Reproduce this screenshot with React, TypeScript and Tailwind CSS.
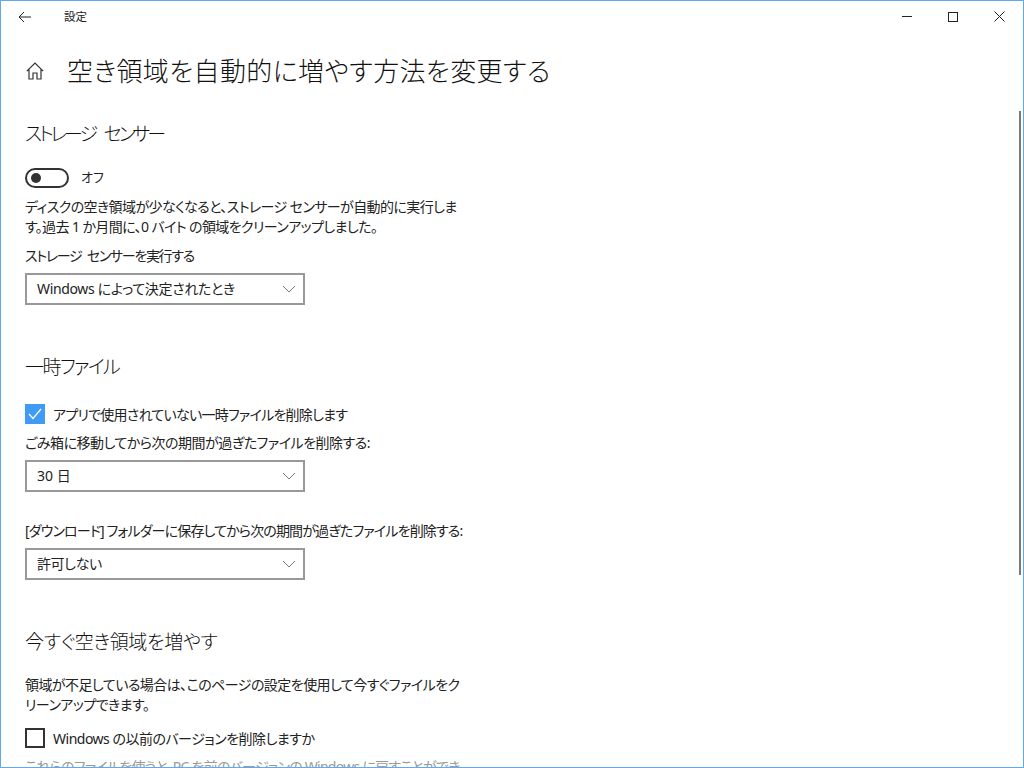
import React from 'react';

const FONT = "font-['Noto_Sans','Noto_Sans_CJK_JP',sans-serif] [font-feature-settings:'palt']";

function Heading({ children, className }: { children: React.ReactNode; className: string }) {
  return <h2 className={`text-[19px] leading-[28px] font-light text-[#111] whitespace-nowrap ${className}`}>{children}</h2>;
}

function Dropdown({ value, className, textClass }: { value: string; className: string; textClass: string }) {
  return (
    <div className={`w-[280px] h-[32px] border-2 border-[#999] flex items-center justify-between pl-[10px] pr-[7px] text-[14px] text-[#222] ${className}`}>
      <span className={`mb-[2px] ${textClass}`}>{value}</span>
      <svg width="14" height="8" viewBox="0 0 14 8" fill="none" stroke="#777" strokeWidth="1"><path d="M1 1l6 6 6-6" /></svg>
    </div>
  );
}

export default function App() {
  return (
    <div className={`relative w-[1024px] h-[768px] overflow-hidden bg-white border border-[#5ea9ef] ${FONT}`}>
      {/* Title bar */}
      <div className="h-[31px] flex items-center text-[#222]">
        <svg className="ml-[17px]" width="14" height="12" viewBox="0 0 14 12" fill="none" stroke="#222" strokeWidth="1"><path d="M13 6H1.2M6 1L1 6l5 5" /></svg>
        <span className="ml-[32px] text-[11.5px]">設定</span>
        <div className="ml-auto flex items-center">
          <div className="w-[10px] h-px bg-[#222] mr-[36px]" />
          <div className="w-[10px] h-[10px] border border-[#222] mr-[36px]" />
          <svg className="mr-[18px]" width="11" height="11" viewBox="0 0 11 11" stroke="#222" strokeWidth="1"><path d="M.5.5l10 10M10.5.5l-10 10" /></svg>
        </div>
      </div>

      <div className="pl-[24px]">
        <div className="mt-[20px] flex items-center h-[38px]">
          <svg className="ml-px" width="18" height="18" viewBox="0 0 18 18" fill="none" stroke="#333" strokeWidth="1.2">
            <path d="M.8 9.2L9 1l8.2 8.2M3 7.2V17h4v-6h4v6h4V7.2" />
          </svg>
          <h1 className="ml-[23px] text-[26px] font-light text-[#111] whitespace-nowrap tracking-[0.37px]">空き領域を自動的に増やす方法を変更する</h1>
        </div>

        <Heading className="mt-[30px] tracking-[-3.1px] [word-spacing:7px]">ストレージ センサー</Heading>

        <div className="mt-[20px] flex items-center h-[20px]">
          <div className="w-[44px] h-[20px] rounded-full border-2 border-[#333] flex items-center pl-[4px]">
            <div className="w-[10px] h-[10px] rounded-full bg-[#333]" />
          </div>
          <span className="ml-[12px] text-[13px] text-[#222]">オフ</span>
        </div>

        <p className="mt-[9px] text-[14px] leading-[20px] text-[#222] whitespace-nowrap tracking-[-0.6px]">
          ディスクの空き領域が少なくなると、ストレージ センサーが自動的に実行しま<br />
          す。過去 1 か月間に、0 バイト の領域をクリーンアップしました。
        </p>
        <p className="mt-[9px] text-[14px] leading-[20px] text-[#222] tracking-[-1.3px] [word-spacing:3px]">ストレージ センサーを実行する</p>
        <Dropdown className="mt-[7px]" textClass="tracking-[-0.35px]" value="Windows によって決定されたとき" />

        <Heading className="mt-[48px] tracking-[-1.6px]">一時ファイル</Heading>

        <div className="mt-[23px] flex items-center h-[20px]">
          <div className="w-[20px] h-[20px] bg-[#3f9bf5] flex items-center justify-center">
            <svg width="14" height="12" viewBox="0 0 14 12" fill="none" stroke="#fff" strokeWidth="1.3"><path d="M1 6l4 4.5L13 1" /></svg>
          </div>
          <span className="ml-[8px] text-[14px] text-[#222] tracking-[-0.75px]">アプリで使用されていない一時ファイルを削除します</span>
        </div>
        <p className="mt-[9px] text-[14px] leading-[20px] text-[#222] tracking-[-0.5px]">ごみ箱に移動してから次の期間が過ぎたファイルを削除する:</p>
        <Dropdown className="mt-[7px]" textClass="" value="30 日" />

        <p className="mt-[29px] text-[14px] leading-[20px] text-[#222] tracking-[-0.85px]">[ダウンロード] フォルダーに保存してから次の期間が過ぎたファイルを削除する:</p>
        <Dropdown className="mt-[7px]" textClass="tracking-[-0.4px]" value="許可しない" />

        <Heading className="mt-[48px] tracking-[-0.3px]">今すぐ空き領域を増やす</Heading>

        <p className="mt-[19px] text-[14px] leading-[20px] text-[#222] whitespace-nowrap tracking-[-0.55px]">
          領域が不足している場合は、このページの設定を使用して今すぐファイルをク<br />
          リーンアップできます。
        </p>
        <div className="mt-[13px] flex items-center h-[20px]">
          <div className="w-[20px] h-[20px] border-2 border-[#333]" />
          <span className="ml-[8px] text-[14px] text-[#222] tracking-[-0.5px]">Windows の以前のバージョンを削除しますか</span>
        </div>
        <p className="mt-[9px] text-[14px] leading-[20px] text-[#999] whitespace-nowrap tracking-[-0.75px]">
          これらのファイルを使うと、PC を前のバージョンの Windows に戻すことができ
        </p>
      </div>

      {/* Scrollbar */}
      <div className="absolute right-[2px] top-[110px] bottom-[192px] w-[2px] bg-[#7a7a7a]" />
    </div>
  );
}
